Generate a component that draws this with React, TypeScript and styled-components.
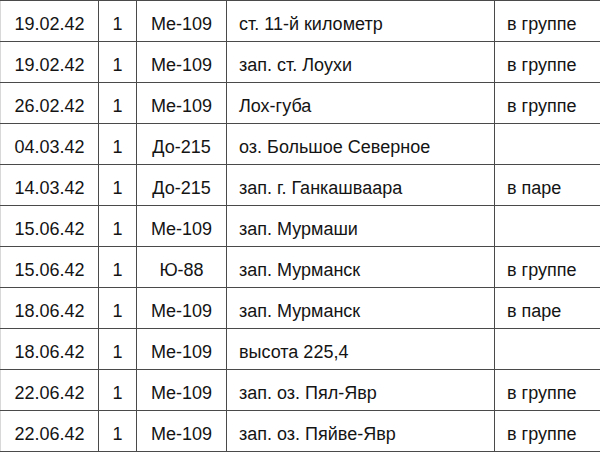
import React from 'react';
import styled, { createGlobalStyle } from 'styled-components';

const GlobalStyle = createGlobalStyle`
  html, body {
    margin: 0;
    padding: 0;
    background: #ffffff;
  }
`;

type Flight = {
  date: string;
  count: string;
  plane: string;
  place: string;
  note: string;
};

const flights: Flight[] = [
  { date: '19.02.42', count: '1', plane: 'Ме-109', place: 'ст. 11-й километр', note: 'в группе' },
  { date: '19.02.42', count: '1', plane: 'Ме-109', place: 'зап. ст. Лоухи', note: 'в группе' },
  { date: '26.02.42', count: '1', plane: 'Ме-109', place: 'Лох-губа', note: 'в группе' },
  { date: '04.03.42', count: '1', plane: 'До-215', place: 'оз. Большое Северное', note: '' },
  { date: '14.03.42', count: '1', plane: 'До-215', place: 'зап. г. Ганкашваара', note: 'в паре' },
  { date: '15.06.42', count: '1', plane: 'Ме-109', place: 'зап. Мурмаши', note: '' },
  { date: '15.06.42', count: '1', plane: 'Ю-88', place: 'зап. Мурманск', note: 'в группе' },
  { date: '18.06.42', count: '1', plane: 'Ме-109', place: 'зап. Мурманск', note: 'в паре' },
  { date: '18.06.42', count: '1', plane: 'Ме-109', place: 'высота 225,4', note: '' },
  { date: '22.06.42', count: '1', plane: 'Ме-109', place: 'зап. оз. Пял-Явр', note: 'в группе' },
  { date: '22.06.42', count: '1', plane: 'Ме-109', place: 'зап. оз. Пяйве-Явр', note: 'в группе' },
];

const columns = [98, 38, 90, 268, 106];

const Table = styled.table`
  width: 600px;
  border-collapse: collapse;
  table-layout: fixed;
  font-family: 'Liberation Sans', Arial, sans-serif;
  font-size: 18px;
  color: #141414;
`;

const Row = styled.tr`
  height: 41px;
`;

const Cell = styled.td<{ $align?: 'left' | 'center'; $first?: boolean }>`
  border: 1px solid #4a4a4a;
  border-left-color: ${(p) => (p.$first ? '#d8d8d8' : '#4a4a4a')};
  padding: 6px 0 0 ${(p) => (p.$align === 'left' ? '12px' : '0')};
  text-align: ${(p) => p.$align ?? 'center'};
  vertical-align: middle;
  white-space: nowrap;
  box-sizing: border-box;
`;

export default function App() {
  return (
    <>
      <GlobalStyle />
      <Table>
        <colgroup>
          {columns.map((w, i) => (
            <col key={i} style={{ width: w }} />
          ))}
        </colgroup>
        <tbody>
          {flights.map((f, i) => (
            <Row key={i}>
              <Cell $first>{f.date}</Cell>
              <Cell>{f.count}</Cell>
              <Cell>{f.plane}</Cell>
              <Cell $align="left">{f.place}</Cell>
              <Cell $align="left">{f.note}</Cell>
            </Row>
          ))}
        </tbody>
      </Table>
    </>
  );
}
